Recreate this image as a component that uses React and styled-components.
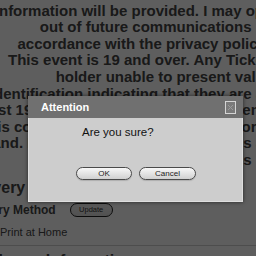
import React from 'react';
import styled, { createGlobalStyle } from 'styled-components';

const GlobalStyle = createGlobalStyle`
  html, body {
    margin: 0;
    padding: 0;
    background: #ffffff;
  }
  body {
    font-family: "Liberation Sans", Arial, sans-serif;
    overflow: hidden;
  }
`

const Page = styled.div`
  position: relative;
  width: 256px;
  height: 256px;
  overflow: hidden;
  background: #ffffff;
  color: #444444;
`

const Terms = styled.div`
  margin: -14px -13px 0 -60px;
  text-align: right;
  font-size: 15px;
  font-weight: bold;
  line-height: 16.6px;
  white-space: nowrap;
`

const TermsLine = styled.div``

const Section = styled.div`
  margin-left: -37px;
`

const Heading = styled.h2`
  margin: ${p => p.$top || 0}px 0 0 0;
  font-size: 16px;
  line-height: 16px;
  font-weight: bold;
  white-space: nowrap;
`

const LabelRow = styled.div`
  display: flex;
  align-items: center;
  gap: 14px;
  height: 16px;
  margin-top: 6px;
`

const Label = styled.span`
  font-size: 12px;
  font-weight: bold;
  white-space: nowrap;
`

const SmallButton = styled.button`
  width: 43px;
  height: 14px;
  padding: 0;
  border: 1px solid #222;
  border-radius: 7px;
  background: linear-gradient(#f4f4f4, #dcdcdc);
  font-family: inherit;
  font-size: 7.5px;
  color: #333;
`

const Value = styled.div`
  margin: 7px 0 0 37px;
  font-size: 11px;
  line-height: 14px;
  white-space: nowrap;
`

const Rule = styled.hr`
  margin: 6px -20px 0 -20px;
  border: none;
  border-top: 1px solid #d0d0d0;
`

const Overlay = styled.div`
  position: absolute;
  inset: 0;
  background: rgba(0, 0, 0, 0.63);
`

const Dialog = styled.div`
  position: absolute;
  left: 28px;
  top: 96px;
  width: 215px;
  height: 106px;
  display: flex;
  flex-direction: column;
  box-shadow: 0 0 4px rgba(0, 0, 0, 0.6);
`

const TitleBar = styled.div`
  height: 22px;
  flex: none;
  display: flex;
  align-items: center;
  justify-content: space-between;
  padding: 0 7px 0 13px;
  background: #707070;
`

const Title = styled.span`
  font-size: 11px;
  font-weight: bold;
  color: #ffffff;
`

const CloseBox = styled.div`
  width: 9px;
  height: 11px;
  border: 1px solid #d4d4d4;
  display: flex;
  align-items: center;
  justify-content: center;
  background: #7a7a7a;
`

const Body = styled.div`
  flex: 1;
  background: #cdcdcd;
  border: 1px solid #dedede;
  border-top: none;
  padding: 7px 0 0 53px;
`

const Message = styled.div`
  font-size: 11.5px;
  line-height: 14px;
  color: #111;
`

const Buttons = styled.div`
  display: flex;
  gap: 7px;
  margin: 28px 0 0 -6px;
`

const DialogButton = styled.button`
  width: ${p => p.$w}px;
  height: 13px;
  padding: 0;
  border: 1px solid #4a4a4a;
  border-radius: 7px;
  background: linear-gradient(#f8f8f8, #d0d0d0);
  font-family: inherit;
  font-size: 8px;
  color: #222;
  box-shadow: 0 1px 1px rgba(0, 0, 0, 0.15);
`

const lines = [
  'Promoter and Venue. Additional event',
  'information will be provided. I may opt',
  'out of future communications in',
  'accordance with the privacy policy.',
  'This event is 19 and over. Any Ticket',
  'holder unable to present valid',
  'identification indicating that they are at',
  'least 19 years old will not be let to attend',
  'this concert and no refund is given for a',
  'and. Event times subject to changes at',
  'See terms and conditions in',
];

const App = () => (
  <React.Fragment>
    <GlobalStyle />
    <Page>
      <Terms>
        {lines.map(line => (
          <TermsLine key={line}>{line}</TermsLine>
        ))}
      </Terms>
      <Section>
        <Heading $top={11}>Delivery</Heading>
        <LabelRow>
          <Label>Delivery Method</Label>
          <SmallButton>Update</SmallButton>
        </LabelRow>
        <Value>Print at Home</Value>
        <Rule />
        <Heading $top={7}>Purchaser Information</Heading>
      </Section>
      <Overlay />
      <Dialog>
        <TitleBar>
          <Title>Attention</Title>
          <CloseBox>
            <svg width="7" height="7" viewBox="0 0 7 7">
              <path d="M1 1 L6 6 M6 1 L1 6" stroke="#9a9a9a" strokeWidth="1" />
            </svg>
          </CloseBox>
        </TitleBar>
        <Body>
          <Message>Are you sure?</Message>
          <Buttons>
            <DialogButton $w={56}>OK</DialogButton>
            <DialogButton $w={57}>Cancel</DialogButton>
          </Buttons>
        </Body>
      </Dialog>
    </Page>
  </React.Fragment>
);

export default App;
